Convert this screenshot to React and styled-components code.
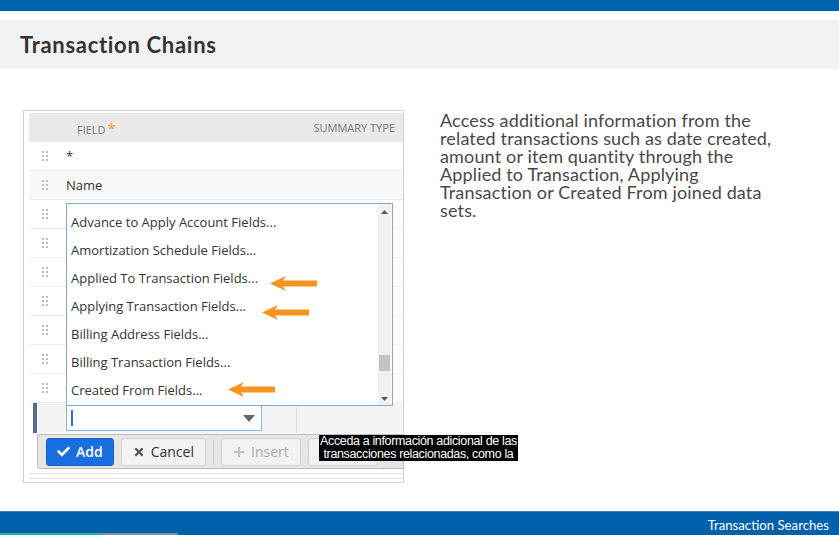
import React from 'react'
import styled, { createGlobalStyle } from 'styled-components'
import { FaCheck, FaTimes, FaPlus, FaTrash } from 'react-icons/fa'

const GlobalStyle = createGlobalStyle`
  html, body { margin: 0; padding: 0; background: #fff; }
  body { font-family: "Open Sans", "Liberation Sans", sans-serif; }
`

const Page = styled.div`
  width: 839px;
  height: 535px;
  display: flex;
  flex-direction: column;
  overflow: hidden;
`

const TopBar = styled.div`
  height: 11px;
  background: #0063ad;
  margin-bottom: 9px;
`

const TitleBand = styled.div`
  height: 49px;
  background: #f2f2f2;
  display: flex;
  align-items: center;
  padding-left: 20px;
  h1 {
    margin: 0;
    font-family: Lato, "Open Sans", sans-serif;
    font-weight: 700;
    font-size: 22px;
    letter-spacing: 0.7px;
    color: #333;
  }
`

const Main = styled.div`
  flex: 1;
  display: flex;
  align-items: flex-start;
  padding: 41px 0 0 23px;
`

const Panel = styled.div`
  position: relative;
  width: 381px;
  height: 373px;
  border: 1px solid #d2d2d2;
  padding: 2px 0 0 5px;
  box-sizing: border-box;
  background: #fff;
`

const HeaderRow = styled.div`
  height: 29px;
  background: #e9e9e9;
  display: flex;
  align-items: center;
  justify-content: space-between;
  padding: 0 8px 0 48px;
  font-size: 11px;
  color: #777;
  text-transform: uppercase;
  span b { color: #f39a1e; font-size: 15px; font-weight: 400; margin-left: 2px; }
`

const Row = styled.div`
  height: 29px;
  display: flex;
  align-items: center;
  border-bottom: 1px solid #eee;
  box-sizing: border-box;
  background: ${p => (p.$shade ? '#f8f8f8' : '#fff')};
  font-size: 13px;
  color: #333;
`

const HandleCell = styled.div`
  width: 37px;
  padding-left: 13px;
  box-sizing: border-box;
  display: flex;
  align-items: center;
`

const Handle = () => (
  <svg width="6" height="10" viewBox="0 0 6 10">
    {[0, 4].map(x =>
      [0, 4, 8].map(y => <rect key={x + '-' + y} x={x} y={y} width="2" height="2" fill="#bbb" />)
    )}
  </svg>
)

const InputRow = styled.div`
  height: 30px;
  display: flex;
  align-items: center;
  background: #f4f4f4;
  margin-left: 4px;
  border-left: 4px solid #5a6b8c;
`

const InputLead = styled.div`
  width: 29px;
`

const SelectBox = styled.div`
  width: 196px;
  height: 26px;
  box-sizing: border-box;
  border: 1px solid #8ab4e0;
  background: #fff;
  display: flex;
  align-items: center;
  justify-content: space-between;
  padding: 0 6px 0 4px;
`

const Caret = styled.div`
  width: 2px;
  height: 16px;
  background: #2a6fcf;
`

const ColDivider = styled.div`
  width: 34px;
  align-self: stretch;
  border-right: 1px solid #ddd;
`

const ActionBar = styled.div`
  margin-left: 8px;
  margin-right: -1px;
  margin-top: 1px;
  height: 35px;
  box-sizing: border-box;
  background: #e6e6e6;
  border: 1px solid #bcbcbc;
  border-radius: 0 0 0 3px;
  display: flex;
  align-items: center;
  gap: 7px;
  padding-left: 8px;
`

const Button = styled.div`
  height: 28px;
  box-sizing: border-box;
  padding: 0 ${p => (p.$primary ? 10 : 11)}px;
  border-radius: 3px;
  display: flex;
  align-items: center;
  gap: 6px;
  font-size: 14px;
  font-weight: ${p => (p.$primary ? 600 : 400)};
  background: ${p => (p.$primary ? '#1a6fe0' : '#f2f2f2')};
  border: 1px solid ${p => (p.$primary ? '#1761c4' : '#cfcfcf')};
  color: ${p => (p.$primary ? '#fff' : p.$disabled ? '#aaa' : '#333')};
  min-width: ${p => p.$min || 0}px;
  svg { font-size: ${p => (p.$primary ? 13 : 12)}px; color: ${p => (p.$primary ? '#fff' : p.$disabled ? '#c4c4c4' : '#555')}; }
`

const Sep = styled.div`
  width: 1px;
  height: 26px;
  background: #cfcfcf;
`

const PanelFoot = styled.div`
  margin: 4px 0 0 0;
  height: 4px;
  border-top: 1px solid #e2e2e2;
  border-bottom: 1px solid #e2e2e2;
`

const Dropdown = styled.div`
  position: absolute;
  left: 42px;
  top: 92px;
  width: 327px;
  height: 203px;
  box-sizing: border-box;
  border: 1px solid #7eaad8;
  background: #fff;
  display: flex;
`

const Options = styled.div`
  flex: 1;
  padding-top: 4px;
`

const Option = styled.div`
  height: 28px;
  display: flex;
  align-items: center;
  padding-left: 4px;
  font-size: 13px;
  color: #333;
`

const Scrollbar = styled.div`
  width: 13px;
  margin-right: 1px;
  background: #f1f1f1;
  display: flex;
  flex-direction: column;
  align-items: center;
  justify-content: space-between;
  padding: 6px 0 4px;
  box-sizing: border-box;
  position: relative;
`

const Thumb = styled.div`
  position: absolute;
  left: 1px;
  right: 1px;
  top: 151px;
  height: 16px;
  background: #c3c3c3;
`

const Arrow = styled.svg`
  position: absolute;
  left: ${p => p.$x}px;
  top: ${p => p.$y}px;
`

const OrangeArrow = ({ x, y }) => (
  <Arrow $x={x} $y={y} width="47" height="15" viewBox="0 0 47 15">
    <path d="M0 7.5 L16 0 L13 4.5 L47 4.5 L47 10.5 L13 10.5 L16 15 Z" fill="#f7941d" />
  </Arrow>
)

const Caption = styled.div`
  position: absolute;
  left: 295px;
  top: 324px;
  background: #000;
  color: #fff;
  font-family: "Liberation Sans", Arial, sans-serif;
  font-size: 12.5px;
  letter-spacing: -0.35px;
  line-height: 13px;
  padding: 0 1px;
  text-align: center;
  white-space: nowrap;
`

const Description = styled.p`
  margin: 1px 0 0 36px;
  width: 380px;
  font-family: Lato, "Open Sans", sans-serif;
  font-size: 18px;
  letter-spacing: 0.15px;
  line-height: 18px;
  color: #484848;
  white-space: pre-line;
`

const Footer = styled.div`
  height: 22px;
  box-sizing: border-box;
  background: #0061aa;
  border-top: 1px solid #3d80b6;
  display: flex;
  align-items: flex-start;
  justify-content: flex-end;
  padding: 6px 10px 0 0;
  font-family: Lato, "Open Sans", sans-serif;
  font-size: 13.2px;
  line-height: 14px;
  color: #fff;
`

const Progress = styled.div`
  height: 2px;
  display: flex;
  background: #0061aa;
`

const ProgressPart = styled.div`
  width: ${p => p.$w}px;
  background: ${p => p.$c};
`

const options = [
  'Advance to Apply Account Fields...',
  'Amortization Schedule Fields...',
  'Applied To Transaction Fields...',
  'Applying Transaction Fields...',
  'Billing Address Fields...',
  'Billing Transaction Fields...',
  'Created From Fields...',
]

export default function App() {
  return (
    <Page>
      <GlobalStyle />
      <TopBar />
      <TitleBand>
        <h1>Transaction Chains</h1>
      </TitleBand>
      <Main>
        <Panel>
          <HeaderRow>
            <span>Field<b>*</b></span>
            <span>Summary Type</span>
          </HeaderRow>
          <Row>
            <HandleCell><Handle /></HandleCell>*
          </Row>
          <Row $shade>
            <HandleCell><Handle /></HandleCell>Name
          </Row>
          {options.map(o => (
            <Row key={o}>
              <HandleCell><Handle /></HandleCell>
            </Row>
          ))}
          <InputRow>
            <InputLead />
            <SelectBox>
              <Caret />
              <svg width="12" height="7" viewBox="0 0 12 7"><path d="M0 0 L12 0 L6 7 Z" fill="#666" /></svg>
            </SelectBox>
            <ColDivider />
          </InputRow>
          <ActionBar>
            <Button $primary><FaCheck />Add</Button>
            <Button><FaTimes />Cancel</Button>
            <Sep />
            <Button $disabled><FaPlus />Insert</Button>
            <Button $disabled $min={70}><FaTrash /></Button>
          </ActionBar>
          <PanelFoot />
          <Dropdown>
            <Options>
              {options.map(o => <Option key={o}>{o}</Option>)}
            </Options>
            <Scrollbar>
              <svg width="7" height="4" viewBox="0 0 7 4"><path d="M0 4 L7 4 L3.5 0 Z" fill="#555" /></svg>
              <Thumb />
              <svg width="7" height="4" viewBox="0 0 7 4"><path d="M0 0 L7 0 L3.5 4 Z" fill="#555" /></svg>
            </Scrollbar>
          </Dropdown>
          <OrangeArrow x={246} y={165} />
          <OrangeArrow x={238} y={194} />
          <OrangeArrow x={204} y={271} />
          <Caption>
            Acceda a información adicional de las<br />transacciones relacionadas, como la
          </Caption>
        </Panel>
        <Description>
          {'Access additional information from the\nrelated transactions such as date created,\namount or item quantity  through the\nApplied to Transaction, Applying\nTransaction or Created From joined data\nsets.'}
        </Description>
      </Main>
      <Footer>Transaction Searches</Footer>
      <Progress>
        <ProgressPart $w={100} $c="#1fb5a6" />
        <ProgressPart $w={78} $c="#7a8ea8" />
      </Progress>
    </Page>
  )
}
